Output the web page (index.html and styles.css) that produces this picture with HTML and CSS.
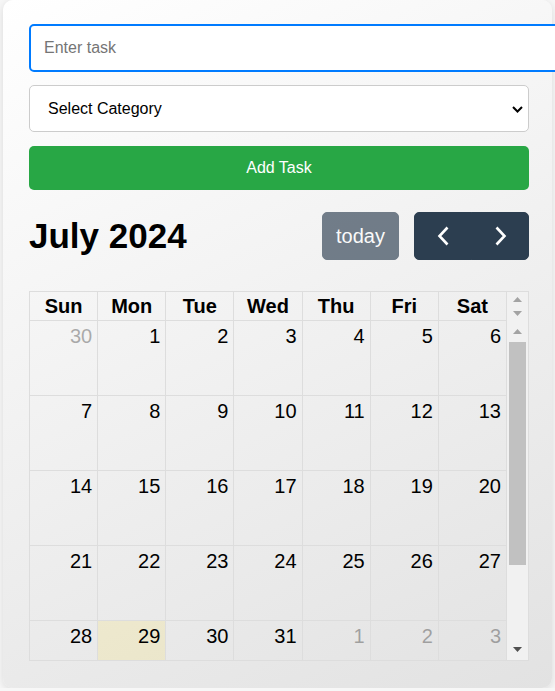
FILE: index.html
```html
<!DOCTYPE html>
<html lang="en">
<head>
<meta charset="utf-8">
<title>Task Calendar</title>
<link rel="stylesheet" href="styles.css">
</head>
<body>
<div class="card">
  <input class="task-input" type="text" placeholder="Enter task">
  <div class="select-wrap">
    <select class="category">
      <option>Select Category</option>
    </select>
    <svg class="select-arrow" width="11" height="7" viewBox="0 0 11 7"><polyline points="1,1 5.5,5.5 10,1" fill="none" stroke="#000" stroke-width="2"/></svg>
  </div>
  <button class="add-btn">Add Task</button>

  <div class="calendar">
    <div class="toolbar">
      <h2 class="title">July 2024</h2>
      <div class="tools">
        <button class="fc-btn today">today</button>
        <div class="btn-group">
          <button class="fc-btn nav prev"><svg width="30" height="30" viewBox="0 0 30 30"><polyline points="19.5,6.5 11.5,15 19.5,23.5" fill="none" stroke="#fff" stroke-width="2.6"/></svg></button>
          <button class="fc-btn nav next"><svg width="30" height="30" viewBox="0 0 30 30"><polyline points="11.5,6.5 19.5,15 11.5,23.5" fill="none" stroke="#fff" stroke-width="2.6"/></svg></button>
        </div>
      </div>
    </div>

    <div class="grid">
      <div class="head">
        <div class="head-row">
          <div class="th">Sun</div><div class="th">Mon</div><div class="th">Tue</div><div class="th">Wed</div><div class="th">Thu</div><div class="th">Fri</div><div class="th">Sat</div>
        </div>
        <div class="gutter head-gutter">
          <div class="sb-btn"><svg width="9" height="5" viewBox="0 0 9 5"><polygon points="0,5 4.5,0 9,5" fill="#a3a3a3"/></svg></div>
          <div class="sb-btn"><svg width="9" height="5" viewBox="0 0 9 5"><polygon points="0,0 4.5,5 9,0" fill="#a3a3a3"/></svg></div>
        </div>
      </div>
      <div class="body">
        <div class="days">
          <div class="day other"><span>30</span></div>
          <div class="day"><span>1</span></div>
          <div class="day"><span>2</span></div>
          <div class="day"><span>3</span></div>
          <div class="day"><span>4</span></div>
          <div class="day"><span>5</span></div>
          <div class="day"><span>6</span></div>

          <div class="day"><span>7</span></div>
          <div class="day"><span>8</span></div>
          <div class="day"><span>9</span></div>
          <div class="day"><span>10</span></div>
          <div class="day"><span>11</span></div>
          <div class="day"><span>12</span></div>
          <div class="day"><span>13</span></div>

          <div class="day"><span>14</span></div>
          <div class="day"><span>15</span></div>
          <div class="day"><span>16</span></div>
          <div class="day"><span>17</span></div>
          <div class="day"><span>18</span></div>
          <div class="day"><span>19</span></div>
          <div class="day"><span>20</span></div>

          <div class="day"><span>21</span></div>
          <div class="day"><span>22</span></div>
          <div class="day"><span>23</span></div>
          <div class="day"><span>24</span></div>
          <div class="day"><span>25</span></div>
          <div class="day"><span>26</span></div>
          <div class="day"><span>27</span></div>

          <div class="day"><span>28</span></div>
          <div class="day today-cell"><span>29</span></div>
          <div class="day"><span>30</span></div>
          <div class="day"><span>31</span></div>
          <div class="day other"><span>1</span></div>
          <div class="day other"><span>2</span></div>
          <div class="day other"><span>3</span></div>
        </div>
        <div class="gutter body-gutter">
          <div class="sb-btn body-btn"><svg width="9" height="5" viewBox="0 0 9 5"><polygon points="0,5 4.5,0 9,5" fill="#a3a3a3"/></svg></div>
          <div class="sb-track"><div class="sb-thumb"></div></div>
          <div class="sb-btn body-btn"><svg width="9" height="5" viewBox="0 0 9 5"><polygon points="0,0 4.5,5 9,0" fill="#505050"/></svg></div>
        </div>
      </div>
    </div>
  </div>
</div>
</body>
</html>
```
FILE: styles.css
```css
html, body {
  margin: 0;
  padding: 0;
}
body {
  background: #f7f7f7;
  font-family: "Liberation Sans", Arial, sans-serif;
  overflow: hidden;
}
.card {
  box-sizing: border-box;
  width: 549px;
  margin-left: 3px;
  padding: 24px 23px 27px 26px;
  border-radius: 10px;
  background: linear-gradient(155deg, #ffffff 0%, #e2e2e2 100%);
  box-shadow: 0 2px 8px rgba(0, 0, 0, 0.12);
}
.task-input {
  display: block;
  width: 100%;
  height: 20px;
  padding: 12px 13px;
  border: 2px solid #007bff;
  border-radius: 5px;
  font-family: inherit;
  font-size: 16px;
  line-height: 20px;
  color: #000;
  background: #fff;
  outline: none;
}
.task-input::placeholder {
  color: #757575;
}
.select-wrap {
  position: relative;
  margin-top: 13px;
}
.category {
  display: block;
  box-sizing: border-box;
  width: 100%;
  height: 47px;
  padding: 0 18px;
  border: 1px solid #cccccc;
  border-radius: 5px;
  background: #fff;
  color: #000;
  font-family: inherit;
  font-size: 16px;
  appearance: none;
  -webkit-appearance: none;
}
.select-arrow {
  position: absolute;
  right: 6px;
  top: 21px;
}
.add-btn {
  display: block;
  box-sizing: border-box;
  width: 100%;
  height: 44px;
  margin-top: 14px;
  border: none;
  border-radius: 5px;
  background: #28a745;
  color: #fff;
  font-family: inherit;
  font-size: 16px;
}
.calendar {
  margin-top: 22px;
}
.toolbar {
  display: flex;
  justify-content: space-between;
  align-items: center;
  margin-bottom: 31px;
}
.title {
  margin: 0;
  font-size: 35px;
  font-weight: bold;
  line-height: 1.2;
  color: #000;
}
.tools {
  display: flex;
  align-items: center;
}
.fc-btn {
  box-sizing: border-box;
  height: 48px;
  padding: 0 13px;
  border: 1px solid #2c3e50;
  background: #2c3e50;
  color: #fff;
  font-family: inherit;
  font-size: 20px;
  line-height: 30px;
}
.today {
  border-radius: 5px;
  opacity: 0.65;
  margin-right: 15px;
}
.btn-group {
  display: flex;
}
.nav {
  display: flex;
  align-items: center;
  justify-content: center;
  width: 58px;
}
.prev {
  border-radius: 5px 0 0 5px;
}
.next {
  border-radius: 0 5px 5px 0;
  margin-left: -1px;
}
.grid {
  box-sizing: border-box;
  width: 100%;
  border: 1px solid #dddddd;
}
.head {
  display: flex;
  height: 29px;
}
.head-row {
  flex: 1;
  display: grid;
  grid-template-columns: repeat(7, 1fr);
}
.th {
  box-sizing: border-box;
  height: 29px;
  border-right: 1px solid #dddddd;
  border-bottom: 1px solid #dddddd;
  text-align: center;
  font-size: 20px;
  font-weight: bold;
  line-height: 28px;
  color: #000;
}
.body {
  display: flex;
  height: 339px;
  overflow: hidden;
}
.days {
  flex: 1;
  display: grid;
  grid-template-columns: repeat(7, 1fr);
  grid-auto-rows: 75px;
  align-content: start;
}
.day {
  box-sizing: border-box;
  border-right: 1px solid #dddddd;
  border-bottom: 1px solid #dddddd;
  padding: 4px 5px;
  text-align: right;
  font-size: 20px;
  line-height: 23px;
  color: #000;
}
.day.other span {
  opacity: 0.3;
}
.today-cell {
  background: rgba(255, 220, 40, 0.15);
}

/* scrollbar gutters */
.gutter {
  flex: 0 0 21px;
  display: flex;
  flex-direction: column;
  background: #f1f1f1;
}
.sb-btn {
  flex: 1;
  display: flex;
  align-items: center;
  justify-content: center;
}
.body-btn {
  flex: 0 0 21px;
}
.sb-track {
  flex: 1;
  padding: 0 2px;
}
.sb-thumb {
  height: 223px;
  background: #c1c1c1;
}
```
